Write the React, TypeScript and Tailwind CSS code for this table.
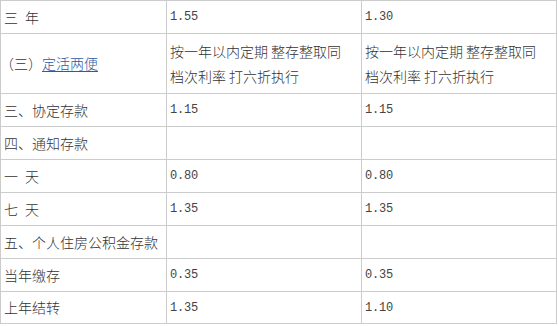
import React from 'react';

type Row = { label: React.ReactNode; a: React.ReactNode; b: React.ReactNode; tall?: boolean; last?: boolean };

const Num: React.FC<{ v: string }> = ({ v }) => (
  <span className="font-['Liberation_Mono',monospace] text-[12px] tracking-[-0.2px] text-[#444]">{v}</span>
);

const Rule: React.FC = () => (
  <div className="leading-[25px]">
    <div>按一年以内定期 整存整取同</div>
    <div>档次利率 打六折执行</div>
  </div>
);

const rows: Row[] = [
  { label: '三\u2002年', a: <Num v="1.55" />, b: <Num v="1.30" /> },
  {
    label: (
      <span className="-ml-[4px]">
        （三）<a href="#" className="text-[#2a5ba8] underline underline-offset-2">定活两便</a>
      </span>
    ),
    a: <Rule />,
    b: <Rule />,
    tall: true,
  },
  { label: '三、协定存款', a: <Num v="1.15" />, b: <Num v="1.15" /> },
  { label: '四、通知存款', a: null, b: null },
  { label: '一\u2002天', a: <Num v="0.80" />, b: <Num v="0.80" /> },
  { label: '七\u2002天', a: <Num v="1.35" />, b: <Num v="1.35" /> },
  { label: '五、个人住房公积金存款', a: null, b: null },
  { label: '当年缴存', a: <Num v="0.35" />, b: <Num v="0.35" /> },
  { label: '上年结转', a: <Num v="1.35" />, b: <Num v="1.10" />, last: true },
];

export default function App() {
  return (
    <div className="w-[558px] h-[326px] bg-white font-['Noto_Sans_CJK_SC',sans-serif] font-light text-[14px] text-[#333]">
      <div className="grid grid-cols-[166px_195px_195px] w-[557px] border-l border-t border-[#cccccc]">
        {rows.map((r, i) => {
          const h = r.tall ? 'h-[60px]' : r.last ? 'h-[32px]' : 'h-[33px]';
          const cell = `flex items-center pl-[3px] border-r border-b border-[#cccccc] ${h}`;
          return (
            <React.Fragment key={i}>
              <div className={cell}>{r.label}</div>
              <div className={cell}>{r.a}</div>
              <div className={cell}>{r.b}</div>
            </React.Fragment>
          );
        })}
      </div>
    </div>
  );
}
